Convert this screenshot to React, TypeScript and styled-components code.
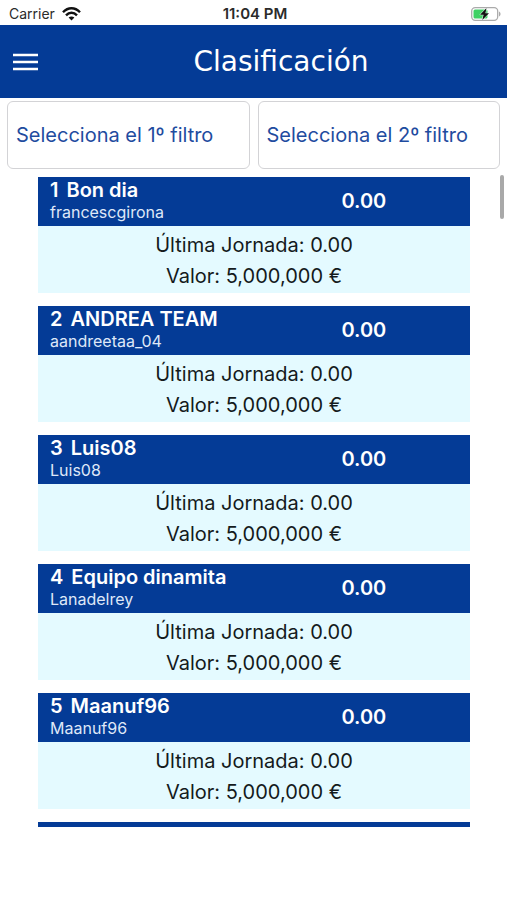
import React from "react";
import styled, { createGlobalStyle } from "styled-components";

const BLUE = "#043b96";

const GlobalStyle = createGlobalStyle`
  *, *::before, *::after { box-sizing: border-box; }
  body {
    margin: 0;
    background: #fff;
    font-family: Inter, Roboto, "Liberation Sans", sans-serif;
  }
`;

const Screen = styled.div`
  display: flex;
  flex-direction: column;
  height: 100vh;
  overflow: hidden;
  padding-bottom: 73px;
`;

const StatusBar = styled.div`
  display: grid;
  grid-template-columns: 1fr auto 1fr;
  align-items: center;
  flex: none;
  height: 25px;
  padding: 2px 6px 0 9px;
  font-size: 14px;
  line-height: 20px;
  color: #2b2b2b;
`;

const Carrier = styled.span`
  display: flex;
  align-items: center;
  gap: 7px;
`;

const Clock = styled.time`
  font-size: 15px;
  font-weight: 600;
`;

const Battery = styled.svg`
  justify-self: end;
`;

const Header = styled.header`
  display: flex;
  align-items: center;
  flex: none;
  gap: 30px;
  height: 73px;
  padding: 0 13px;
  background: ${BLUE};
  color: #fff;
`;

const MenuButton = styled.button`
  display: flex;
  padding: 0;
  border: 0;
  background: none;
  color: inherit;
  cursor: pointer;
`;

const Title = styled.h1`
  flex: 1;
  margin: 0;
  font-family: "DejaVu Sans", sans-serif;
  font-size: 28px;
  font-weight: 400;
  line-height: 32px;
  text-align: center;
`;

const Filters = styled.div`
  display: grid;
  grid-template-columns: 1fr 1fr;
  gap: 8px;
  flex: none;
  padding: 3px 7px 5px;
`;

const FilterSelect = styled.select`
  appearance: none;
  width: 100%;
  height: 68px;
  padding: 0 8px;
  border: 1px solid #d3d3d6;
  border-radius: 6px;
  background: #fff;
  color: #1f4c9f;
  font-family: inherit;
  font-size: 20px;
`;

const ListArea = styled.main`
  position: relative;
  display: flex;
  flex: 1;
  min-height: 0;
`;

const Ranking = styled.ol`
  display: flex;
  flex-direction: column;
  flex: 1;
  gap: 13px;
  margin: 0;
  padding: 3px 37px 0 38px;
  list-style: none;
  overflow-y: auto;
  scrollbar-width: none;
`;

const ScrollThumb = styled.div`
  position: absolute;
  top: 1px;
  right: 3px;
  width: 4px;
  height: 44px;
  border-radius: 2px;
  background: #a9a9a9;
`;

const Card = styled.li`
  flex: none;
`;

const CardHeader = styled.div`
  display: grid;
  grid-template-columns: 5fr 2fr;
  align-items: center;
  height: 49px;
  padding: 0 12px;
  background: ${BLUE};
  color: #fff;
`;

const Team = styled.div`
  min-width: 0;
  padding-bottom: 3px;
`;

const TeamName = styled.h2`
  display: flex;
  gap: 8px;
  margin: 0;
  font-size: 20px;
  font-weight: 600;
  line-height: 24px;
`;

const Owner = styled.p`
  margin: 0;
  font-size: 16px;
  line-height: 20px;
  color: #dfe8f8;
`;

const Points = styled.strong`
  padding-bottom: 2px;
  font-size: 20px;
  font-weight: 600;
`;

const CardBody = styled.div`
  padding: 4px 0 1px;
  background: #e4faff;
  color: #141a1c;
  font-size: 20px;
  line-height: 31px;
  text-align: center;
`;

const Line = styled.p`
  margin: 0;
`;

const teams = [
  { name: "Bon dia", owner: "francescgirona" },
  { name: "ANDREA TEAM", owner: "aandreetaa_04" },
  { name: "Luis08", owner: "Luis08" },
  { name: "Equipo dinamita", owner: "Lanadelrey" },
  { name: "Maanuf96", owner: "Maanuf96" },
  { name: "Fillos del", owner: "Fillos" },
];

export default function App() {
  return (
    <>
      <GlobalStyle />
      <Screen>
        <StatusBar>
          <Carrier>
            Carrier
            <svg width="19" height="14" viewBox="0 0 19 14" fill="none" stroke="#111" strokeWidth="2.4" aria-hidden="true">
              <path d="M1 5.2C6-.1 13-.1 18 5.2M4 8.3c3.3-3.4 7.7-3.4 11 0" />
              <path d="M9.5 13.6 6.6 10.6c1.7-1.6 4.1-1.6 5.8 0z" fill="#111" stroke="none" />
            </svg>
          </Carrier>
          <Clock>11:04 PM</Clock>
          <Battery width="30" height="14" viewBox="0 0 30 14" role="img" aria-label="Cargando">
            <rect x="0.7" y="0.7" width="26" height="12.6" rx="3.5" fill="#fff" stroke="#aaa" strokeWidth="1.3" />
            <rect x="2.5" y="2.5" width="14" height="9" rx="1.5" fill="#3fd164" />
            <path d="M28 4.5v5c2-.8 2-4.2 0-5z" fill="#aaa" />
            <path d="M15.5 1 9 7.7h3.6L11.3 13 18 6.3h-3.6z" fill="#111" stroke="#fff" strokeWidth="1" paintOrder="stroke" />
          </Battery>
        </StatusBar>
        <Header>
          <MenuButton aria-label="Menú">
            <svg width="25" height="18" viewBox="0 0 25 18" stroke="#fff" strokeWidth="2.4" aria-hidden="true">
              <path d="M0 2h25M0 9h25M0 16h25" />
            </svg>
          </MenuButton>
          <Title>Clasificación</Title>
        </Header>
        <Filters>
          <FilterSelect aria-label="Primer filtro">
            <option>Selecciona el 1º filtro</option>
          </FilterSelect>
          <FilterSelect aria-label="Segundo filtro">
            <option>Selecciona el 2º filtro</option>
          </FilterSelect>
        </Filters>
        <ListArea>
          <Ranking>
            {teams.map((team, index) => (
              <Card key={team.name}>
                <CardHeader>
                  <Team>
                    <TeamName>
                      <span>{index + 1}</span>
                      <span>{team.name}</span>
                    </TeamName>
                    <Owner>{team.owner}</Owner>
                  </Team>
                  <Points>0.00</Points>
                </CardHeader>
                <CardBody>
                  <Line>Última Jornada: 0.00</Line>
                  <Line>Valor: 5,000,000 €</Line>
                </CardBody>
              </Card>
            ))}
          </Ranking>
          <ScrollThumb />
        </ListArea>
      </Screen>
    </>
  );
}
